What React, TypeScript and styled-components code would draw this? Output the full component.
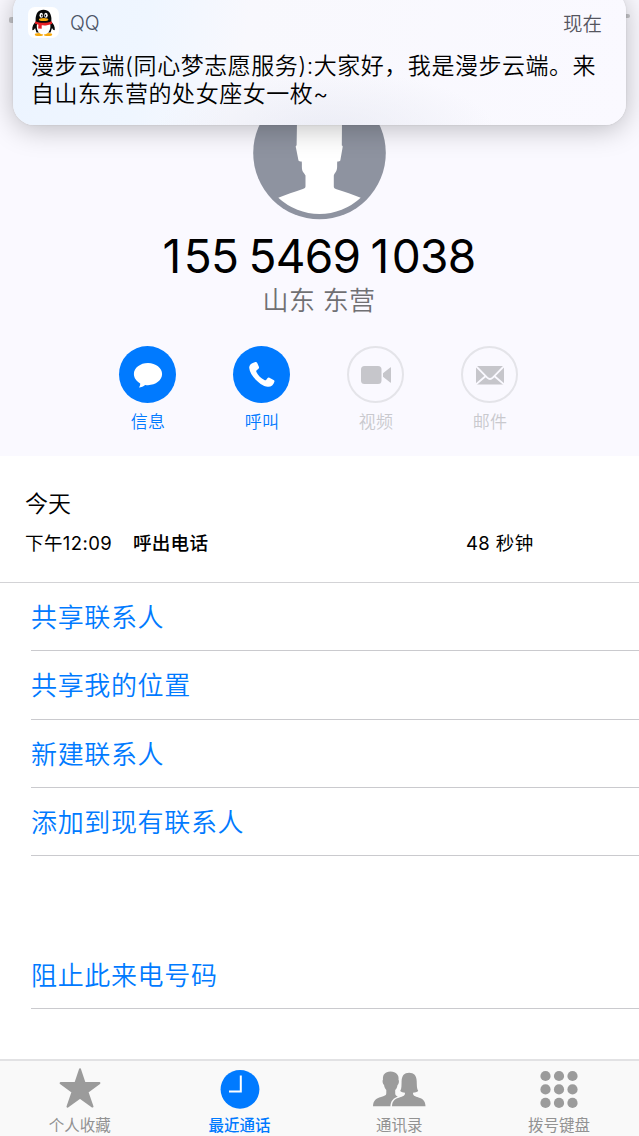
import React from "react";
import styled, { createGlobalStyle } from "styled-components";

const BLUE = "#007aff";

const GlobalStyle = createGlobalStyle`
  *, *::before, *::after { box-sizing: border-box; }
  body {
    margin: 0;
    background: #fff;
    font-family: Inter, "Noto Sans CJK SC", sans-serif;
    color: #000;
  }
`;

const Screen = styled.div`
  position: relative;
  width: 639px;
  height: 1136px;
  overflow: hidden;
  display: flex;
  flex-direction: column;
  background: #fff;
`;

const Header = styled.header`
  height: 456px;
  flex: none;
  padding: 86px 1px 0 0;
  display: flex;
  flex-direction: column;
  align-items: center;
  background: #faf9ff;
`;

const AvatarArt = styled.svg`
  display: block;
  width: 134px;
  height: 134px;
`;

const PhoneNumber = styled.h1`
  margin: 11px 0 0;
  font-size: 46px;
  line-height: 50px;
  font-weight: 400;
  letter-spacing: -0.7px;
  word-spacing: -2px;
  white-space: nowrap;
`;

const LeadDigit = styled.span`
  letter-spacing: 2.4px;
`;

const Region = styled.div`
  margin-top: 5px;
  font-size: 26px;
  line-height: 30px;
  font-weight: 350;
  letter-spacing: 0.3px;
  color: #707073;
`;

const Actions = styled.div`
  display: flex;
  margin-top: 30px;
`;

const Action = styled.div<{ $active?: boolean }>`
  width: 114px;
  display: flex;
  flex-direction: column;
  align-items: center;
  gap: 8px;
  font-size: 17px;
  line-height: 22px;
  letter-spacing: 0.2px;
  font-weight: 350;
  color: ${(p) => (p.$active ? BLUE : "#c9c9ce")};
`;

const ActionCircle = styled.span<{ $active?: boolean }>`
  width: 57px;
  height: 57px;
  margin-left: -1px;
  border-radius: 50%;
  border: ${(p) => (p.$active ? "0" : "2px solid #e4e4e9")};
  background: ${(p) => (p.$active ? BLUE : "transparent")};
  display: flex;
  align-items: center;
  justify-content: center;
  svg { flex: none; display: block; }
`;

const CallLog = styled.section`
  height: 127px;
  flex: none;
  padding: 32px 25px 0;
  border-bottom: 1px solid #d3d3d6;
`;

const Day = styled.div`
  font-size: 23px;
  line-height: 32px;
  font-weight: 350;
`;

const CallRow = styled.div`
  display: grid;
  grid-template-columns: 108px 333px auto;
  margin-top: 10px;
  font-size: 18.5px;
  line-height: 26px;
  letter-spacing: 0.4px;
  white-space: nowrap;
`;

const CallKind = styled.span`
  font-weight: 500;
  font-size: 18.6px;
  letter-spacing: 0.2px;
`;

const Option = styled.div<{ $gap?: number }>`
  height: 68.3px;
  flex: none;
  margin: ${(p) => p.$gap ?? 0}px 0 0 31px;
  border-bottom: 1px solid #cacace;
  font-size: 26px;
  line-height: 70px;
  letter-spacing: 0.65px;
  font-weight: 350;
  color: ${BLUE};
`;

const TabBar = styled.nav`
  height: 77px;
  flex: none;
  margin-top: auto;
  padding-top: 6px;
  display: grid;
  grid-template-columns: repeat(4, 1fr);
  background: #f9f9f9;
  border-top: 2px solid #e2e2e4;
`;

const Tab = styled.div<{ $active?: boolean }>`
  display: flex;
  flex-direction: column;
  align-items: center;
  font-size: 15.5px;
  line-height: 26px;
  font-weight: ${(p) => (p.$active ? 500 : 400)};
  color: ${(p) => (p.$active ? BLUE : "#929292")};
  white-space: nowrap;
  svg { display: block; height: 46px; flex: none; }
`;

const Peek = styled.span<{ $left: number; $top: number; $w: number; $h: number }>`
  position: absolute;
  left: ${(p) => p.$left}px;
  top: ${(p) => p.$top}px;
  width: ${(p) => p.$w}px;
  height: ${(p) => p.$h}px;
  background: #c4c4c8;
  border-radius: 2px;
`;

const Banner = styled.aside`
  position: absolute;
  left: 13px;
  top: -10px;
  width: 613px;
  height: 135px;
  padding: 16px 18px 0;
  border-radius: 21px;
  background:
    radial-gradient(ellipse 170px 60px at 51% 104%, rgba(230, 232, 242, 0.7), rgba(230, 232, 242, 0)),
    linear-gradient(100deg, #ecf4ff 0%, #eff6ff 22%, #f8f8fd 38%, #faf9ff 100%);
  box-shadow: 0 4px 28px rgba(0, 0, 0, 0.25), 0 0 2px rgba(0, 0, 0, 0.12);
`;

const BannerHead = styled.div`
  height: 32px;
  display: flex;
  align-items: center;
  margin-left: -3px;
  font-size: 19.5px;
  color: #4a5365;
`;

const AppBadge = styled.span`
  width: 31px;
  height: 31px;
  border-radius: 7px;
  background: #fff;
  svg { display: block; }
`;

const AppName = styled.span`
  margin-left: 11px;
  padding-top: 2px;
  font-weight: 350;
`;

const Time = styled.time`
  margin-left: auto;
  margin-right: 6px;
  font-size: 19.5px;
  font-weight: 350;
  color: #55555f;
`;

const Message = styled.p`
  margin: 14px 0 0;
  font-size: 23px;
  line-height: 28px;
  letter-spacing: 0.52px;
  font-weight: 350;
  white-space: nowrap;
`;

const Penguin = () => (
  <svg width="31" height="31" viewBox="0 0 31 31">
    <ellipse cx="11" cy="27.5" rx="4.2" ry="1.5" fill="#f7a90c" />
    <ellipse cx="20" cy="27.5" rx="4.2" ry="1.5" fill="#f7a90c" />
    <path d="M7.6 14.500C5.600 17 4 19.500 4.300 22.800c.3 1 1.600.2 2.800-1.800L8.500 25.500h14L24 21c1.200 2 2.500 2.800 2.800 1.800.3-3.300-1.400-5.800-3.400-8.300z" fill="#080808" />
    <path d="M7.600 13.500C7.300 6.500 10.300 2.700 15.500 2.700s8.200 3.800 7.900 10.800L22 17H9z" fill="#080808" />
    <path d="M9.200 16h12.800c1.500 6-1.200 11.500-6.500 11.500S7.700 22 9.200 16z" fill="#fff" />
    <ellipse cx="13.300" cy="8.300" rx="1.800" ry="2.500" fill="#fff" />
    <ellipse cx="17.900" cy="8.300" rx="1.800" ry="2.500" fill="#fff" />
    <ellipse cx="13.800" cy="8.600" rx=".7" ry="1.100" />
    <ellipse cx="17.400" cy="8.600" rx=".7" ry="1.100" />
    <ellipse cx="15.600" cy="12.500" rx="4.700" ry="1.500" fill="#f7a90c" />
    <path d="M7.400 14.300c4.500 2 11.700 2 16.200 0l.6 2.400c-3.800 1.700-7.500 2-10.500 1.600v3.400l-3.500-.3.200-3.700-3.600-1.200z" fill="#e71f25" />
  </svg>
);

const Avatar = () => (
  <AvatarArt viewBox="0 0 134 134">
    <circle cx="67.5" cy="67" r="66.3" fill="#8e93a0" />
    <path
      d="M45 36C45 18 54 10 67.500 10S90 18 90 36l-.2 23.500c1.200.2.9 1.200.7 2.500l-2.200 12.500c-.4 1-1.500.8-3 1-.5 3 .4 6.500-1 9.500-1 2-2 2.500-2.500 4.500v11c0 1.500 1 2.200 2.700 2.800 8.500 2.900 16.300 5.200 24.200 8.500a60.600 60.600 0 0 1-82.400 0c7.900-3.300 15.700-5.600 24.500-8.800 1.800-.7 2.700-1.200 2.700-2.700V89.500c-.9-2-2.400-2.700-3.100-4.700-1-3-.2-6.200-.7-9.200-1.600-.2-2.700-.1-3.200-1.100L44 62c-.3-1.300-.6-2.300.6-2.500z"
      fill="#fff"
    />
  </AvatarArt>
);

const BubbleIcon = () => (
  <svg width="30" height="28" viewBox="0 0 30 28">
    <path d="M15 2C7.200 2 .9 6.900.9 13.100c0 3.900 2.500 7.300 6.300 9.300.1 1.600-.4 3-1.400 4.100 2.600-.2 4.700-1.200 6.300-2.600.9.200 1.900.3 2.900.3 7.800 0 14.100-5 14.100-11.100S22.800 2 15 2z" fill="#fff" />
  </svg>
);

const HandsetIcon = () => (
  <svg width="28" height="28" viewBox="0 0 28 28">
    <path d="M5.400 1.700l2-.7c.8-.2 1.300.1 1.700.8l1.800 4c.3.800.2 1.400-.4 1.900L8.700 9.200c-.5.500-.6 1-.3 1.700 1.700 3.300 4.600 6.300 8 8.200.7.400 1.200.3 1.700-.2l1.500-1.800c.5-.6 1.100-.7 1.800-.3l4.200 2.200c.8.400 1 1 .8 1.700-.9 3.200-3.400 5.400-6.600 5.100C12.200 25.100 1.700 14.200 1.200 6.700 1.100 4.300 3 2.500 5.400 1.700z" fill="#fff" />
  </svg>
);

const VideoIcon = () => (
  <svg width="32" height="20" viewBox="0 0 32 20">
    <rect x="1" y="1" width="20.5" height="18" rx="3.5" fill="#c6c6cb" />
    <path d="M23 8.200l7.200-5.700c.5-.4.800-.2.800.4v14.200c0 .6-.3.800-.8.400L23 11.800z" fill="#c6c6cb" />
  </svg>
);

const MailIcon = () => (
  <svg width="30" height="20" viewBox="0 0 30 20">
    <rect x="1" y="1" width="28" height="18.5" fill="#c6c6cb" />
    <path d="M.5.700l11.700 12c1.800 1.700 3.800 1.700 5.600 0L29.500.700M.5 19.800L10.700 11M29.500 19.800L19.300 11" fill="none" stroke="#faf9ff" strokeWidth="1.8" />
  </svg>
);

const StarIcon = () => (
  <svg width="44" height="46" viewBox="0 0 44 46">
    <path d="M22 2.300l4.600 13.800h14.800L29.500 25l5 14.600L22 30.700 9.500 39.600l5-14.600L2.600 16.100h14.800z" fill="#9b9b9b" stroke="#9b9b9b" strokeWidth="2" strokeLinejoin="round" />
  </svg>
);

const ClockIcon = () => (
  <svg width="44" height="46" viewBox="0 0 44 46">
    <circle cx="22" cy="22.3" r="19.4" fill={BLUE} />
    <path d="M22.800 8.500v16H11" fill="none" stroke="#fff" strokeWidth="2" />
  </svg>
);

const PeopleIcon = () => (
  <svg width="54" height="46" viewBox="0 0 54 46">
    <path d="M1 39.200c.2-5.800 3-7.600 8-9.200 3.500-1.200 5.300-1.500 5.300-3.800v-3.200c-1.500-1.400-2-3.200-2.300-5.200-1.400-.3-1.800-4.500-1-5.200C10.500 8.200 12.700 4.500 18.500 4.500s8.700 3.700 8 8.200c.9.700.4 4.900-1 5.200-.3 2-.8 3.800-2.300 5.200v3.200c0 1.900.9 2.400 2.600 3.300-4.200 1.800-7 4-7.400 9.600z" fill="#9b9b9b" />
    <path d="M20 39.200c.2-5.900 3.500-7.500 8.700-9.200 3.100-1 4.300-1.500 4.300-4.300-2 0-3.500-.5-4.800-1.700 1.600-2.300 1.200-6 1.400-10 .3-5.500 2.600-8.300 7.500-8.300s7.400 2.800 7.600 8.300c.2 4 0 7.700 1.500 10-1.300 1.200-3.100 1.700-5.200 1.700 0 2.800 1.200 3.300 4.300 4.300 5.200 1.700 8 3.300 8.200 9.200z" fill="#9b9b9b" />
  </svg>
);

const KeypadIcon = () => (
  <svg width="44" height="46" viewBox="0 0 44 46">
    {[9, 22.4, 35.9].map((y) =>
      [8.5, 22, 35.5].map((x) => <circle key={`${x}-${y}`} cx={x} cy={y} r="5.1" fill="#9b9b9b" />)
    )}
  </svg>
);

const actions = [
  { label: "信息", icon: <BubbleIcon />, active: true },
  { label: "呼叫", icon: <HandsetIcon />, active: true },
  { label: "视频", icon: <VideoIcon />, active: false },
  { label: "邮件", icon: <MailIcon />, active: false },
];

const tabs = [
  { label: "个人收藏", icon: <StarIcon />, active: false },
  { label: "最近通话", icon: <ClockIcon />, active: true },
  { label: "通讯录", icon: <PeopleIcon />, active: false },
  { label: "拨号键盘", icon: <KeypadIcon />, active: false },
];

export default function App() {
  return (
    <>
      <GlobalStyle />
      <Screen>
        <Header>
          <Avatar />
          <PhoneNumber>
            <LeadDigit>1</LeadDigit>55 5469 <LeadDigit>1</LeadDigit>038
          </PhoneNumber>
          <Region>山东 东营</Region>
          <Actions>
            {actions.map((a) => (
              <Action key={a.label} $active={a.active}>
                <ActionCircle $active={a.active}>{a.icon}</ActionCircle>
                {a.label}
              </Action>
            ))}
          </Actions>
        </Header>
        <CallLog>
          <Day>今天</Day>
          <CallRow>
            <span>下午12:09</span>
            <CallKind>呼出电话</CallKind>
            <span>48 秒钟</span>
          </CallRow>
        </CallLog>
        <Option>共享联系人</Option>
        <Option>共享我的位置</Option>
        <Option>新建联系人</Option>
        <Option>添加到现有联系人</Option>
        <Option $gap={85}>阻止此来电号码</Option>
        <TabBar>
          {tabs.map((t) => (
            <Tab key={t.label} $active={t.active}>
              {t.icon}
              {t.label}
            </Tab>
          ))}
        </TabBar>
        <Peek $left={9} $top={17} $w={6} $h={6} />
        <Peek $left={624} $top={14} $w={6} $h={4} />
        <Banner>
          <BannerHead>
            <AppBadge>
              <Penguin />
            </AppBadge>
            <AppName>QQ</AppName>
            <Time>现在</Time>
          </BannerHead>
          <Message>
            漫步云端(同心梦志愿服务):大家好，我是漫步云端。来
            <br />
            自山东东营的处女座女一枚~
          </Message>
        </Banner>
      </Screen>
    </>
  );
}
